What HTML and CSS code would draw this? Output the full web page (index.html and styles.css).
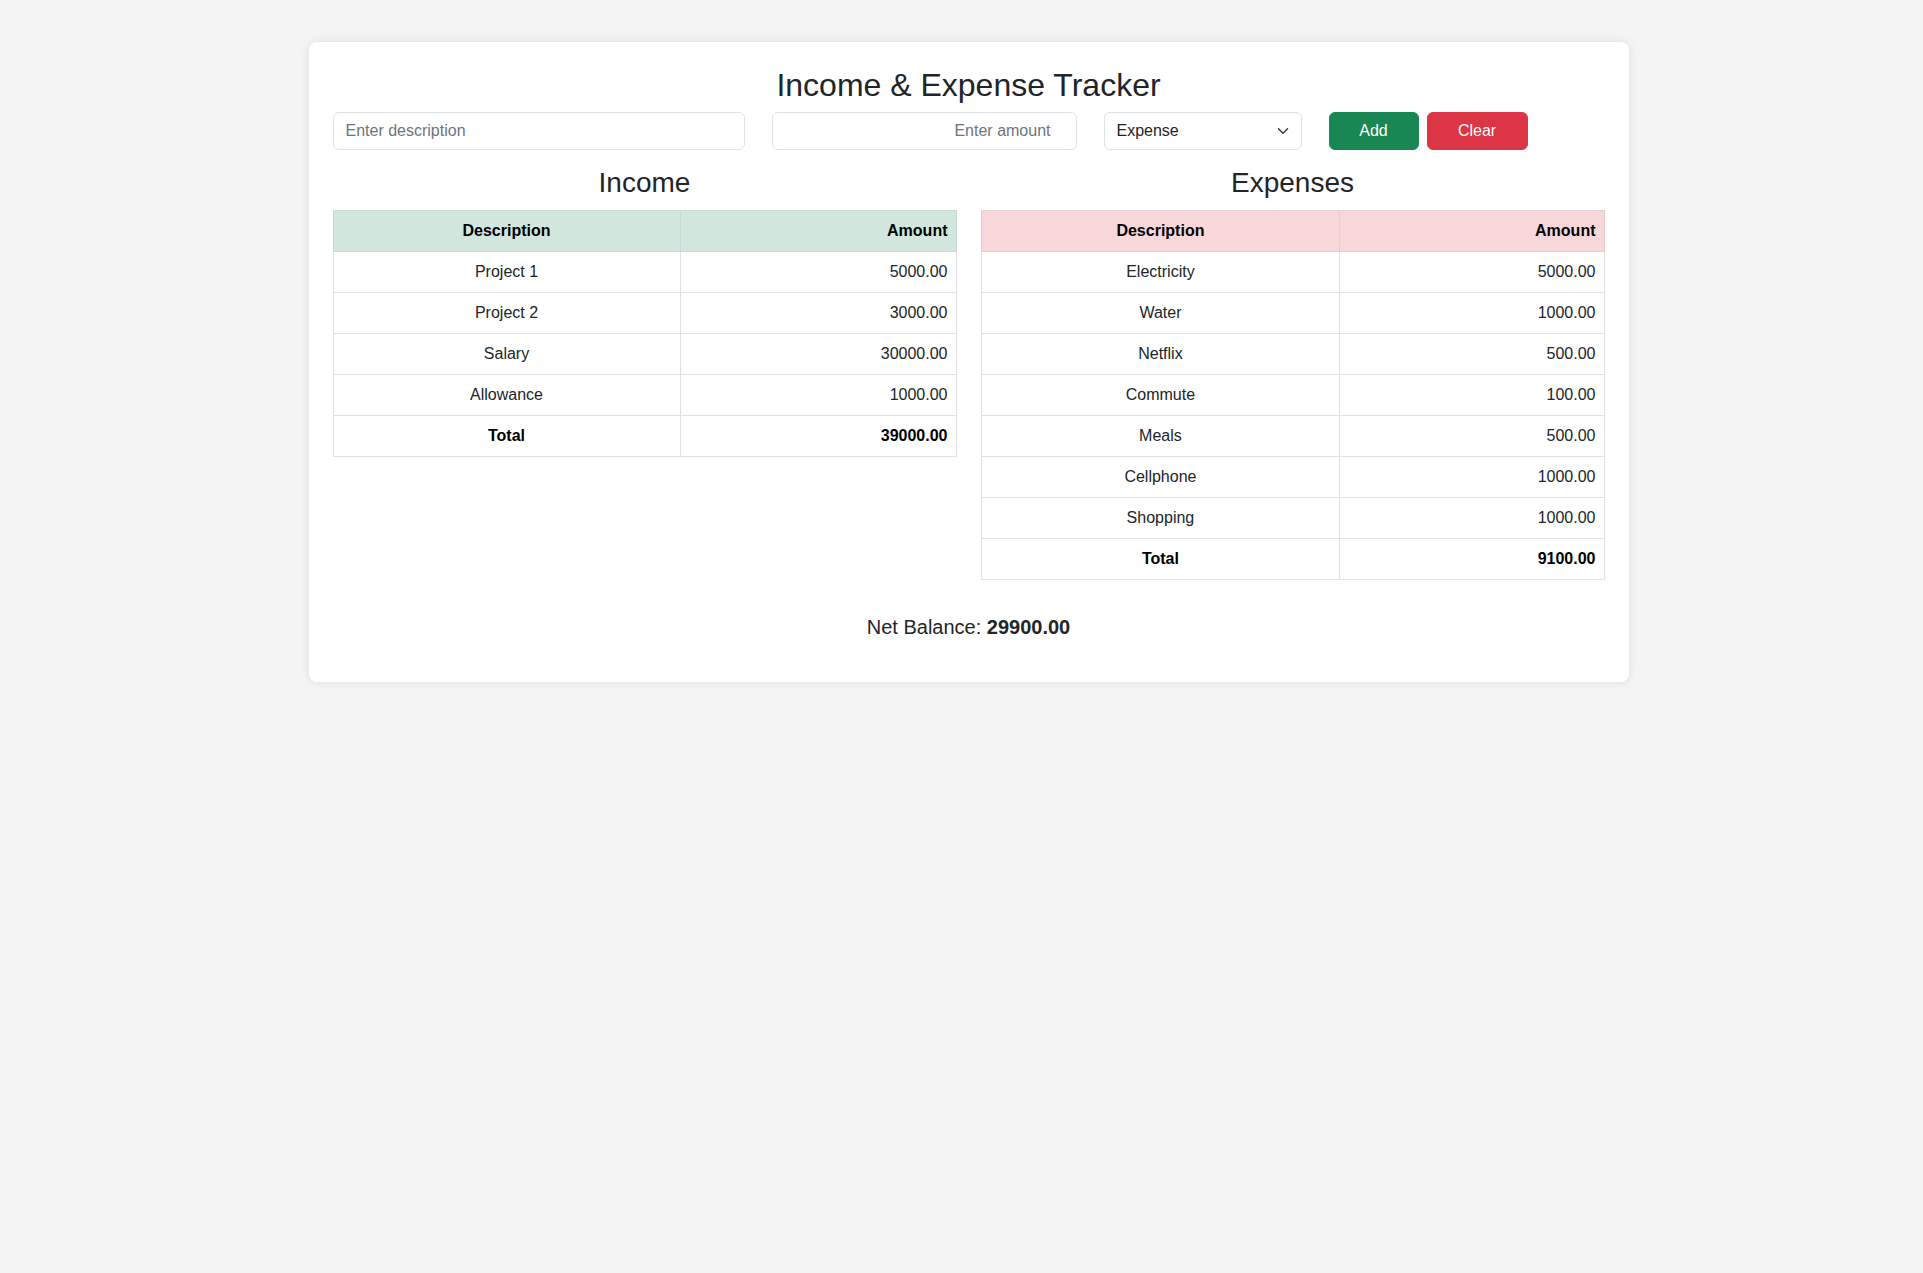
FILE: index.html
```html
<!DOCTYPE html>
<html lang="en">
<head>
<meta charset="UTF-8">
<title>Income &amp; Expense Tracker</title>
<link rel="stylesheet" href="styles.css">
</head>
<body>
<div class="card">
  <h1 class="title">Income &amp; Expense Tracker</h1>
  <div class="form-row">
    <input class="field field-desc" type="text" placeholder="Enter description">
    <input class="field field-amount" type="text" placeholder="Enter amount">
    <div class="field field-select">
      <span>Expense</span>
      <svg class="chevron" width="16" height="12" viewBox="0 0 16 16"><path d="m2 5 6 6 6-6" fill="none" stroke="#343a40" stroke-width="2" stroke-linecap="round" stroke-linejoin="round"/></svg>
    </div>
    <button class="btn btn-add">Add</button>
    <button class="btn btn-clear">Clear</button>
  </div>
  <div class="tables">
    <section class="col">
      <h3 class="section-title">Income</h3>
      <table class="tbl tbl-income">
        <thead>
          <tr><th class="c-desc">Description</th><th class="c-amt">Amount</th></tr>
        </thead>
        <tbody>
          <tr><td class="c-desc">Project 1</td><td class="c-amt">5000.00</td></tr>
          <tr><td class="c-desc">Project 2</td><td class="c-amt">3000.00</td></tr>
          <tr><td class="c-desc">Salary</td><td class="c-amt">30000.00</td></tr>
          <tr><td class="c-desc">Allowance</td><td class="c-amt">1000.00</td></tr>
          <tr class="total"><td class="c-desc">Total</td><td class="c-amt">39000.00</td></tr>
        </tbody>
      </table>
    </section>
    <section class="col">
      <h3 class="section-title">Expenses</h3>
      <table class="tbl tbl-expense">
        <thead>
          <tr><th class="c-desc">Description</th><th class="c-amt">Amount</th></tr>
        </thead>
        <tbody>
          <tr><td class="c-desc">Electricity</td><td class="c-amt">5000.00</td></tr>
          <tr><td class="c-desc">Water</td><td class="c-amt">1000.00</td></tr>
          <tr><td class="c-desc">Netflix</td><td class="c-amt">500.00</td></tr>
          <tr><td class="c-desc">Commute</td><td class="c-amt">100.00</td></tr>
          <tr><td class="c-desc">Meals</td><td class="c-amt">500.00</td></tr>
          <tr><td class="c-desc">Cellphone</td><td class="c-amt">1000.00</td></tr>
          <tr><td class="c-desc">Shopping</td><td class="c-amt">1000.00</td></tr>
          <tr class="total"><td class="c-desc">Total</td><td class="c-amt">9100.00</td></tr>
        </tbody>
      </table>
    </section>
  </div>
  <p class="net">Net Balance: <strong>29900.00</strong></p>
</div>
</body>
</html>
```
FILE: styles.css
```css
* { box-sizing: border-box; }
html, body { margin: 0; }
body {
  background: #f4f4f4;
  font-family: "Liberation Sans", Arial, sans-serif;
  font-size: 16px;
  line-height: 1.5;
  color: #212529;
  padding: 42px 0 40px 14px;
}
.card {
  width: 1320px;
  margin: 0 auto;
  background: #fff;
  border-radius: 8px;
  box-shadow: 0 0 10px rgba(0, 0, 0, 0.1);
  padding: 24px;
}
.title {
  margin: 0 0 8px;
  font-size: 32px;
  font-weight: 400;
  line-height: 1.2;
  text-align: center;
}
.form-row {
  display: flex;
  align-items: center;
}
.field {
  height: 38px;
  border: 1px solid #dee2e6;
  border-radius: 6px;
  padding: 6px 12px;
  font: inherit;
  font-size: 16px;
  color: #212529;
  background: #fff;
  margin-right: 27px;
  outline: none;
}
.field::placeholder { color: #6c757d; }
.field-desc { width: 412px; }
.field-amount { width: 305px; text-align: right; padding-right: 25px; }
.field-select {
  width: 198px;
  display: flex;
  align-items: center;
  justify-content: space-between;
  line-height: 24px;
}
.chevron { display: block; margin-right: -2px; }
.btn {
  height: 38px;
  border: 1px solid transparent;
  border-radius: 6px;
  color: #fff;
  font: inherit;
  font-size: 16px;
  padding: 0;
  text-align: center;
  cursor: pointer;
}
.btn-add { width: 90px; background: #198754; border-color: #198754; }
.btn-clear { width: 101px; margin-left: 8px; background: #dc3545; border-color: #dc3545; }
.tables {
  display: grid;
  grid-template-columns: 1fr 1fr;
  column-gap: 24px;
  margin-top: 16px;
}
.section-title {
  margin: 0 0 10px;
  font-size: 28px;
  font-weight: 400;
  line-height: 1.2;
  text-align: center;
}
.tbl {
  width: 100%;
  border-collapse: collapse;
  margin-bottom: 16px;
  border: 1px solid #dee2e6;
}
.tbl th, .tbl td {
  padding: 8px;
  border: 1px solid #dee2e6;
  line-height: 24px;
}
.tbl th { color: #000; font-weight: 700; }
.c-desc { text-align: center; }
.c-amt { text-align: right; }
.tbl-income th { background: #d1e7dd; border-color: #c7dbd2; }
.tbl-income .c-desc { width: 55.7%; }
.tbl-expense th { background: #f8d7da; border-color: #e6cdcf; }
.tbl-expense .c-desc { width: 57.6%; }
.tbl thead tr { border-bottom: 1px solid #bcd0c7; }
.tbl-expense thead tr { border-bottom-color: #dfc2c4; }
.total td { font-weight: 700; color: #000; }
.net {
  margin: 16px 0 16px;
  text-align: center;
  font-size: 20px;
  line-height: 1.5;
}
.net strong { font-weight: 700; }
```
